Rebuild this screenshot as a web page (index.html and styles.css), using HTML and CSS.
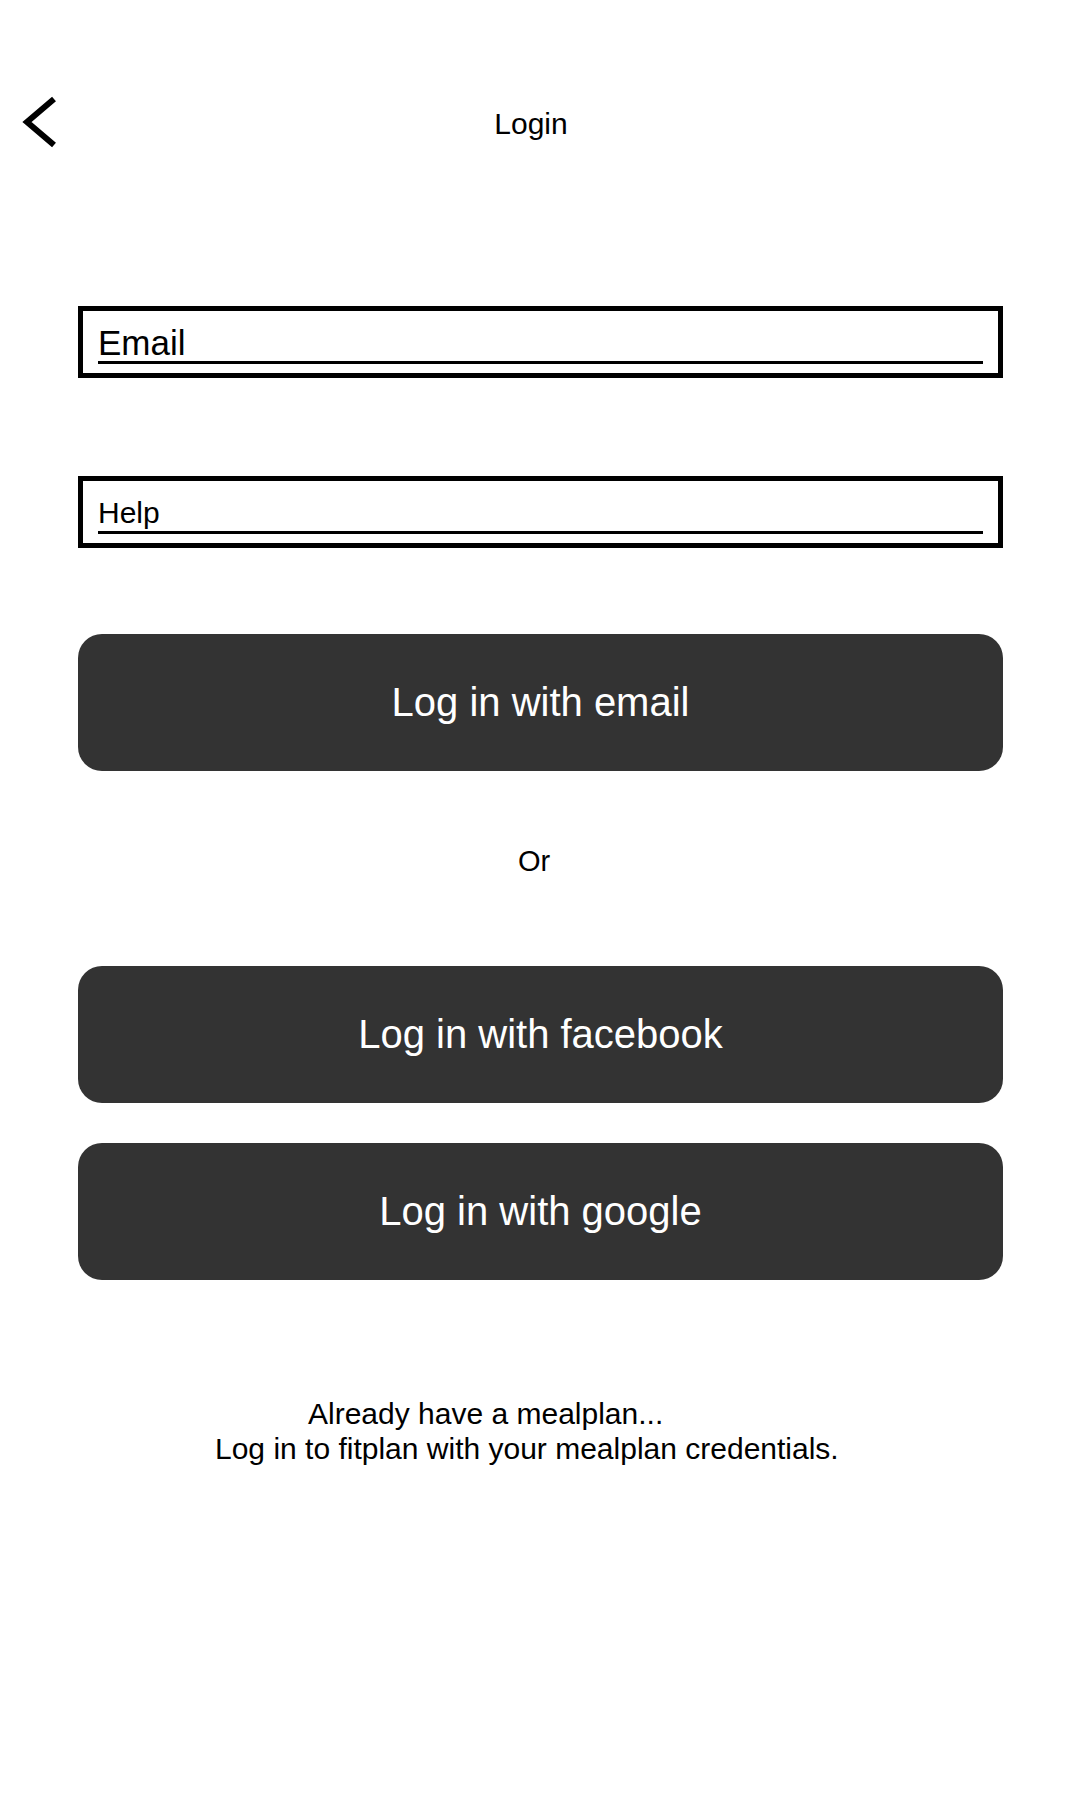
FILE: index.html
```html
<!DOCTYPE html>
<html lang="en">
<head>
    <meta charset="UTF-8">
    <meta name="viewport" content="width=device-width, initial-scale=1.0">
    <title>Login</title>
    <link rel="stylesheet" href="styles.css">
</head>
<body>

<header class="toolbar">
    <button class="back" type="button" aria-label="Back">
        <svg width="64" height="64" viewBox="0 0 64 64">
            <polyline points="38,7 11,30 38,53" fill="none" stroke="#000" stroke-width="6" stroke-linejoin="miter"/>
        </svg>
    </button>
    <h1 class="title">Login</h1>
    <span></span>
</header>

<main class="content">
    <form id="login-form">
        <div class="field field-email">
            <input type="email" id="email" name="email" placeholder="Email">
        </div>
        <div class="field field-help">
            <input type="password" id="password" name="password" placeholder="Help">
        </div>
        <button type="submit" class="action first">Log in with email</button>
    </form>

    <p class="or">Or</p>

    <button type="button" class="action">Log in with facebook</button>
    <button type="button" class="action next">Log in with google</button>

    <div class="note">
        <span class="note-first">Already have a mealplan...</span>
        <span>Log in to fitplan with your mealplan credentials.</span>
    </div>
</main>

</body>
</html>
```

FILE: styles.css
```css
body {
    margin: 0;
    padding: 0;
    background: #fff;
    color: #000;
    font-family: 'Liberation Sans', Arial, sans-serif;
}

.toolbar {
    display: grid;
    grid-template-columns: 1fr auto 1fr;
    align-items: center;
    height: 64px;
    margin-top: 92px;
    padding: 0 34px 0 16px;
}
.back {
    justify-self: start;
    width: 64px;
    height: 64px;
    padding: 0;
    border: none;
    background: none;
    cursor: pointer;
}
.back svg {
    display: block;
}
.title {
    margin: 0;
    font-size: 30px;
    line-height: 30px;
    font-weight: normal;
}

.content {
    margin: 150px 77px 0 78px;
}

.field {
    box-sizing: border-box;
    height: 72px;
    border: 5px solid #000;
    padding: 0 15px 9px;
}
.field-help {
    margin-top: 98px;
}
.field input {
    box-sizing: border-box;
    display: block;
    width: 100%;
    height: 53px;
    margin: 0;
    padding: 14px 0 0;
    border: none;
    border-bottom: 3px solid #000;
    outline: none;
    background: transparent;
    font-family: inherit;
    color: #000;
}
.field-email input {
    font-size: 35px;
}
.field-help input {
    font-size: 30px;
}
.field input::placeholder {
    color: #000;
    opacity: 1;
}

.action {
    display: block;
    width: 100%;
    height: 137px;
    margin: 0;
    border: none;
    border-radius: 24px;
    background: #333333;
    color: #fff;
    font-family: inherit;
    font-size: 40px;
    cursor: pointer;
}
.action.first {
    margin-top: 86px;
}
.action.next {
    margin-top: 40px;
}

.or {
    margin: 70px 0 85px;
    padding-right: 13px;
    text-align: center;
    font-size: 29px;
    line-height: 40px;
}

.note {
    margin: 116px 0 0 137px;
    font-size: 30px;
    line-height: 35px;
}
.note span {
    display: block;
}
.note-first {
    padding-left: 93px;
}
```
